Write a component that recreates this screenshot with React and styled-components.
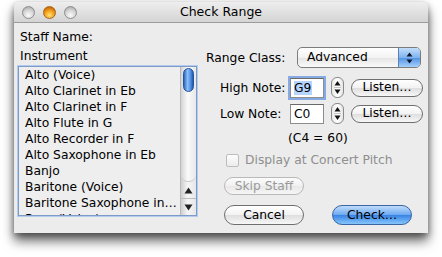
import React from 'react';
import styled, {createGlobalStyle} from 'styled-components';

const INSTRUMENTS = [
    'Alto (Voice)',
    'Alto Clarinet in Eb',
    'Alto Clarinet in F',
    'Alto Flute in G',
    'Alto Recorder in F',
    'Alto Saxophone in Eb',
    'Banjo',
    'Baritone (Voice)',
    'Baritone Saxophone in…',
    'Bass (Voice)',
]

function Stepper() {
    return (
        <StepperBox>
            <svg width="7" height="17" viewBox="0 0 7 17">
                <path d="M3.5 2 L6.5 6.5 L0.5 6.5 Z" fill="#111"/>
                <line x1="0" y1="8.5" x2="7" y2="8.5" stroke="#c4c4c4"/>
                <path d="M3.5 15 L6.5 10.5 L0.5 10.5 Z" fill="#111"/>
            </svg>
        </StepperBox>
    )
}

function App() {
    return (
        <Desktop>
            <GlobalStyle/>
            <Window>
                <TitleBar>
                    <Lights>
                        <Light/>
                        <Light $active/>
                        <Light/>
                    </Lights>
                    <Title>Check Range</Title>
                    <span/>
                </TitleBar>

                <Content>
                    <LeftColumn>
                        <Label>Staff Name:</Label>
                        <Label $gap>Instrument</Label>
                        <ListBox>
                            <Items>
                                {INSTRUMENTS.map((name, id) => (
                                    <Item key={id}>{name}</Item>
                                ))}
                            </Items>
                            <Scrollbar>
                                <Track>
                                    <Thumb/>
                                </Track>
                                <Arrow>
                                    <svg width="9" height="7" viewBox="0 0 9 7">
                                        <path d="M4.5 0.5 L8.5 6.5 L0.5 6.5 Z" fill="#222"/>
                                    </svg>
                                </Arrow>
                                <Arrow $down>
                                    <svg width="9" height="7" viewBox="0 0 9 7">
                                        <path d="M4.5 6.5 L8.5 0.5 L0.5 0.5 Z" fill="#222"/>
                                    </svg>
                                </Arrow>
                            </Scrollbar>
                        </ListBox>
                    </LeftColumn>

                    <RightColumn>
                        <RangeRow>
                            <RangeLabel>Range Class:</RangeLabel>
                            <Popup>
                                <PopupText>Advanced</PopupText>
                                <PopupArrows>
                                    <svg width="7" height="12" viewBox="0 0 7 12">
                                        <path d="M3.5 0.5 L6.5 4.5 L0.5 4.5 Z" fill="#101830"/>
                                        <path d="M3.5 11.5 L6.5 7.5 L0.5 7.5 Z" fill="#101830"/>
                                    </svg>
                                </PopupArrows>
                            </Popup>
                        </RangeRow>

                        <NoteRow>
                            <NoteLabel>High Note:</NoteLabel>
                            <Field $focus><Selected>G9</Selected></Field>
                            <Stepper/>
                            <Button $small>Listen…</Button>
                        </NoteRow>

                        <NoteRow $tight>
                            <NoteLabel>Low Note:</NoteLabel>
                            <Field>C0</Field>
                            <Stepper/>
                            <Button $small>Listen…</Button>
                        </NoteRow>

                        <Formula>(C4 = 60)</Formula>

                        <CheckRow>
                            <CheckBox/>
                            <span>Display at Concert Pitch</span>
                        </CheckRow>

                        <SkipRow>
                            <Button $small disabled>Skip Staff</Button>
                        </SkipRow>

                        <ButtonRow>
                            <Button>Cancel</Button>
                            <Button $primary>Check…</Button>
                        </ButtonRow>
                    </RightColumn>
                </Content>
            </Window>
        </Desktop>
    );
}

const GlobalStyle = createGlobalStyle`
    html, body {
        margin: 0;
        padding: 0;
        background: #fff;
    }
    body {
        font-family: "DejaVu Sans", "Liberation Sans", sans-serif;
        font-size: 12.3px;
        color: #000;
    }
`

const Desktop = styled.div`
    width: 442px;
    height: 257px;
    box-sizing: border-box;
    padding: 2px 0 0 14px;
    background: #fff;
`

const Window = styled.div`
    width: 414px;
    height: 231px;
    display: flex;
    flex-direction: column;
    background: #ececec;
    border-radius: 5px 5px 0 0;
    box-shadow: 0 8px 12px rgba(0, 0, 0, .6), 0 2px 6px rgba(0, 0, 0, .35);
`

const TitleBar = styled.div`
    height: 20px;
    padding: 0 8px;
    display: grid;
    grid-template-columns: 1fr auto 1fr;
    align-items: center;
    border-bottom: 1px solid #9c9c9c;
    border-radius: 5px 5px 0 0;
    background: linear-gradient(#eeeeee, #d4d4d4);
`

const Lights = styled.div`
    display: flex;
    gap: 8px;
`

const Light = styled.span`
    width: 13px;
    height: 13px;
    box-sizing: border-box;
    border-radius: 50%;
    border: 1px solid ${p => p.$active ? '#a8661a' : '#8e8e8e'};
    background: ${p => p.$active
        ? 'radial-gradient(circle at 50% 75%, #ffe27a 0, #f5a31c 45%, #c86a0a 80%)'
        : 'radial-gradient(circle at 50% 75%, #fbfbfb 0, #d6d6d6 50%, #a9a9a9 90%)'};
`

const Title = styled.span`
    font-size: 12.5px;
    line-height: 20px;
`

const Content = styled.div`
    flex: 1;
    display: flex;
    gap: 9px;
    padding: 7px 0 0 4px;
`

const LeftColumn = styled.div`
    width: 179px;
    display: flex;
    flex-direction: column;
`

const Label = styled.div`
    line-height: 15px;
    padding-left: 2px;
    margin-bottom: ${p => p.$gap ? '2px' : '4px'};
`

const ListBox = styled.div`
    height: 150px;
    box-sizing: border-box;
    display: flex;
    border: 1px solid #7d9bc9;
    box-shadow: 0 0 0 1px #b4cbee;
    background: #eeeeee;
    overflow: hidden;
`

const Items = styled.div`
    flex: 1;
    padding-left: 6px;
    overflow: hidden;
`

const Item = styled.div`
    line-height: 16px;
    white-space: nowrap;
`

const Scrollbar = styled.div`
    width: 15px;
    display: flex;
    flex-direction: column;
    border-left: 1px solid #b9b9b9;
    background: linear-gradient(to right, #cfcfcf, #f6f6f6 45%, #e6e6e6);
`

const Track = styled.div`
    flex: 1;
    padding: 1px 2px;
    border-bottom: 1px solid #c9c9c9;
    border-radius: 0 0 7px 7px;
    background: linear-gradient(to right, #d4d4d4, #fafafa 45%, #e8e8e8);
`

const Thumb = styled.div`
    height: 24px;
    border-radius: 6px;
    box-sizing: border-box;
    border: 1px solid #24549a;
    background: linear-gradient(to right, #2f66c4, #8fc0f4 40%, #4a8ce0 75%, #1f56b4);
`

const Arrow = styled.div`
    height: 16px;
    display: flex;
    align-items: center;
    justify-content: center;
    border-top: ${p => p.$down ? '1px solid #bdbdbd' : 'none'};
`

const RightColumn = styled.div`
    flex: 1;
    display: flex;
    flex-direction: column;
    padding-top: 17px;
`

const RangeRow = styled.div`
    height: 21px;
    display: flex;
    align-items: center;
`

const RangeLabel = styled.span`
    width: 91px;
`

const Popup = styled.div`
    width: 124px;
    height: 21px;
    box-sizing: border-box;
    display: flex;
    border: 1px solid #7c7c7c;
    border-radius: 5px;
    overflow: hidden;
    background: linear-gradient(#ffffff, #f3f3f3 50%, #e4e4e4 51%, #fafafa);
`

const PopupText = styled.span`
    flex: 1;
    padding-left: 9px;
    line-height: 19px;
`

const PopupArrows = styled.span`
    width: 21px;
    display: flex;
    align-items: center;
    justify-content: center;
    border-left: 1px solid #5d7fb4;
    background: linear-gradient(#c4defa, #7fb4ef 50%, #4f90e2 51%, #a6d2fb);
`

const NoteRow = styled.div`
    height: 20px;
    margin-top: ${p => p.$tight ? '6px' : '9px'};
    padding-left: 14px;
    display: grid;
    grid-template-columns: 70px 34px 13px 72px;
    align-items: center;

    & > :nth-child(3) {
        margin-left: 7px;
    }

    & > :nth-child(4) {
        margin-left: 14px;
    }
`

const NoteLabel = styled.span`
    white-space: nowrap;
`

const Field = styled.div`
    height: 20px;
    box-sizing: border-box;
    padding: 0 3px;
    line-height: 18px;
    background: #fff;
    border: 1px solid #8d8d8d;
    border-top-color: #6a6a6a;
    box-shadow: ${p => p.$focus ? '0 0 0 2px #86abe4' : 'none'};
`

const Selected = styled.span`
    background: #b5d5ff;
    padding-right: 1px;
`

const StepperBox = styled.div`
    width: 13px;
    height: 21px;
    box-sizing: border-box;
    display: flex;
    align-items: center;
    justify-content: center;
    border: 1px solid #8a8a8a;
    border-radius: 6px;
    background: linear-gradient(to right, #e9e9e9, #ffffff 50%, #e6e6e6);
`

const Formula = styled.div`
    margin-top: 7px;
    padding-left: 82px;
    line-height: 16px;
`

const CheckRow = styled.div`
    margin-top: 6px;
    padding-left: 20px;
    height: 16px;
    display: flex;
    align-items: center;
    gap: 6px;
    color: #8f8f8f;
`

const CheckBox = styled.span`
    width: 13px;
    height: 13px;
    box-sizing: border-box;
    border: 1px solid #bdbdbd;
    border-radius: 2px;
    background: linear-gradient(#fdfdfd, #ececec);
`

const SkipRow = styled.div`
    margin-top: 9px;
    padding-left: 18px;
    display: flex;
`

const ButtonRow = styled.div`
    margin-top: 10px;
    padding-left: 18px;
    display: flex;
    gap: 28px;
`

const Button = styled.button`
    width: ${p => p.$small && !p.disabled ? '72px' : '80px'};
    height: ${p => p.$small ? '18px' : '20px'};
    padding: 0;
    box-sizing: border-box;
    font-family: inherit;
    font-size: 12.3px;
    line-height: 1;
    color: ${p => p.disabled ? '#9a9a9a' : '#000'};
    border-radius: 10px;
    border: 1px solid ${p => p.$primary ? '#3a64a4' : p.disabled ? '#b9b9b9' : '#6e6e6e'};
    background: ${p => p.$primary
        ? 'linear-gradient(#c0dcfb, #6eaaf0 48%, #3a84e4 52%, #86c6fd)'
        : p.disabled
            ? 'linear-gradient(#fbfbfb, #f1f1f1 50%, #e8e8e8 51%, #f6f6f6)'
            : 'linear-gradient(#ffffff, #f2f2f2 50%, #dedede 51%, #f7f7f7)'};
`

export default App;
